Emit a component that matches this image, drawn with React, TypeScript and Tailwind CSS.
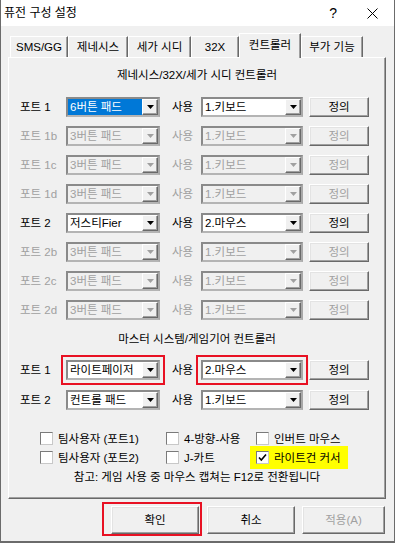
const font = "font-['Liberation_Sans','Noto_Sans_CJK_KR',sans-serif]";

type Port = { label: string; device: string; use: string; on: boolean; picked?: boolean };

const genesisPorts: Port[] = [
  { label: "포트 1", device: "6버튼 패드", use: "1.키보드", on: true, picked: true },
  { label: "포트 1b", device: "3버튼 패드", use: "1.키보드", on: false },
  { label: "포트 1c", device: "3버튼 패드", use: "1.키보드", on: false },
  { label: "포트 1d", device: "3버튼 패드", use: "1.키보드", on: false },
  { label: "포트 2", device: "저스티Fier", use: "2.마우스", on: true },
  { label: "포트 2b", device: "3버튼 패드", use: "1.키보드", on: false },
  { label: "포트 2c", device: "3버튼 패드", use: "1.키보드", on: false },
  { label: "포트 2d", device: "3버튼 패드", use: "1.키보드", on: false },
];

const tabs = [
  { name: "SMS/GG", w: "w-[58px]" },
  { name: "제네시스", w: "w-[60px]" },
  { name: "세가 시디", w: "w-[63px]" },
  { name: "32X", w: "w-[48px]" },
  { name: "컨트롤러", w: "w-[62px]", active: true },
  { name: "부가 기능", w: "w-[62px]" },
];

const Combo = ({ text, on, picked, w, ring }: { text: string; on: boolean; picked?: boolean; w: string; ring?: boolean }) => (
  <div
    className={`${w} flex h-[20px] shrink-0 items-stretch border-2 border-[#8a8a8a] border-b-[#b4b4b4] border-r-[#a8a8a8] ${
      on ? "bg-white" : "bg-[#f0f0f0]"
    } ${ring ? "outline-2 outline-offset-[3px] outline-[#e81123]" : ""}`}
  >
    <div className="flex flex-1 items-center overflow-hidden">
      <span
        className={`flex h-full w-full items-center whitespace-nowrap pl-[2px] ${
          picked ? "bg-[#0078d7] text-white" : on ? "text-black" : "text-[#a0a0a0]"
        }`}
      >
        {text}
      </span>
    </div>
    <div className="flex w-[16px] items-center justify-center border border-t-white border-l-white border-b-[#696969] border-r-[#696969] bg-[#f0f0f0] shadow-[inset_-1px_-1px_0_#a0a0a0]">
      <svg width="7" height="4" viewBox="0 0 7 4">
        <path d="M0 0h7L3.5 4z" fill={on ? "#000" : "#a0a0a0"} />
      </svg>
    </div>
  </div>
);

const WinButton = ({ text, on = true, w, h }: { text: string; on?: boolean; w: string; h: string }) => (
  <div
    className={`${w} ${h} flex shrink-0 items-center justify-center border border-t-white border-l-white border-b-[#696969] border-r-[#696969] bg-[#f0f0f0] shadow-[inset_-1px_-1px_0_#a0a0a0,inset_1px_1px_0_#e3e3e3] ${
      on ? "text-black" : "text-[#a0a0a0]"
    }`}
  >
    {text}
  </div>
);

const PortRow = ({ p, mt, ring1, ring2 }: { p: Port; mt: string; ring1?: boolean; ring2?: boolean }) => (
  <div className={`flex h-[20px] items-center pl-[11px] ${mt}`}>
    <span className={`w-[46px] shrink-0 whitespace-nowrap ${p.on ? "text-black" : "text-[#a0a0a0]"}`}>{p.label}</span>
    <Combo text={p.device} on={p.on} picked={p.picked} w="w-[94px]" ring={ring1} />
    <span className={`ml-[12px] w-[29px] shrink-0 ${p.on ? "text-black" : "text-[#a0a0a0]"}`}>사용</span>
    <Combo text={p.use} on={p.on} w="w-[102px]" ring={ring2} />
    <div className="ml-[6px]">
      <WinButton text="정의" on={p.on} w="w-[60px]" h="h-[20px]" />
    </div>
  </div>
);

const Check = ({ label, checked }: { label: string; checked?: boolean }) => (
  <div className="flex items-center">
    <div className="flex h-[13px] w-[13px] shrink-0 items-center justify-center border border-[#7a7a7a] border-b-[#c8c8c8] border-r-[#c8c8c8] bg-white">
      {checked ? (
        <svg width="9" height="9" viewBox="0 0 9 9">
          <path d="M1 4.5l2.3 2.5L8 1.5" fill="none" stroke="#000" strokeWidth="1.6" />
        </svg>
      ) : null}
    </div>
    <span className="ml-[5px] whitespace-nowrap">{label}</span>
  </div>
);

export default function App() {
  return (
    <div className={`${font} h-[543px] w-[395px] overflow-hidden border-x border-b-2 border-[#6b6b6b] bg-[#f0f0f0] text-[11.5px] leading-[16px] text-black`}>
      {/* title bar */}
      <div className="flex h-[26px] items-center bg-white pl-[3px]">
        <span className="text-[12px]">퓨전 구성 설정</span>
        <span className="ml-auto mr-[30px] text-[14px]">?</span>
        <svg width="11" height="11" viewBox="0 0 11 11" className="mr-[16px]">
          <path d="M0.5 0.5l10 10M10.5 0.5l-10 10" stroke="#000" strokeWidth="1" />
        </svg>
      </div>

      {/* tabs */}
      <div className="mt-[7px] flex h-[24px] items-end pl-[9px]">
        {tabs.map((t) =>
          t.active ? (
            <div
              key={t.name}
              className={`${t.w} relative z-10 -mb-px flex h-[25px] items-start justify-center border-l border-t border-r border-l-white border-t-white border-r-[#696969] bg-[#f0f0f0] pt-[3px] shadow-[inset_-1px_0_0_#a0a0a0]`}
            >
              {t.name}
            </div>
          ) : (
            <div
              key={t.name}
              className={`${t.w} flex h-[21px] items-center justify-center border-l border-t border-r border-l-white border-t-white border-r-[#696969] shadow-[inset_-1px_0_0_#a0a0a0]`}
            >
              {t.name}
            </div>
          )
        )}
      </div>

      {/* panel */}
      <div className="ml-[7px] flex h-[442px] w-[378px] flex-col border border-t-white border-l-white border-b-[#696969] border-r-[#696969] pt-[9px] shadow-[inset_-1px_-1px_0_#a0a0a0]">
        <div className="text-center">제네시스/32X/세가 시디 컨트롤러</div>
        {genesisPorts.map((p, i) => (
          <PortRow key={p.label} p={p} mt={i === 0 ? "mt-[14px]" : "mt-[9px]"} />
        ))}

        <div className="mt-[11px] text-center">마스터 시스템/게임기어 컨트롤러</div>
        <PortRow p={{ label: "포트 1", device: "라이트페이저", use: "2.마우스", on: true }} mt="mt-[13px]" ring1 ring2 />
        <PortRow p={{ label: "포트 2", device: "컨트롤 패드", use: "1.키보드", on: true }} mt="mt-[10px]" />

        <div className="mt-[19px] flex flex-col pl-[31px]">
          <div className="flex h-[19px] items-center">
            <div className="w-[126px]"><Check label="팀사용자 (포트1)" /></div>
            <div className="w-[90px]"><Check label="4-방향-사용" /></div>
            <Check label="인버트 마우스" />
          </div>
          <div className="flex h-[19px] items-center">
            <div className="w-[126px]"><Check label="팀사용자 (포트2)" /></div>
            <div className="w-[84px]"><Check label="J-카트" /></div>
            <div className="flex h-[23px] w-[98px] items-center bg-[#ffff00] pl-[6px]">
              <Check label="라이트건 커서" checked />
            </div>
          </div>
        </div>
        <div className="mt-[2px] text-center">참고: 게임 사용 중 마우스 캡쳐는 F12로 전환됩니다</div>
      </div>

      {/* buttons */}
      <div className="mt-[3px] flex items-start pl-[101px]">
        <div className="border-2 border-[#e81123] pb-0 pl-[7px] pr-[1px] pt-[2px]">
          <WinButton text="확인" w="w-[88px]" h="h-[28px]" />
        </div>
        <div className="ml-[5px] mt-[4px]">
          <WinButton text="취소" w="w-[88px]" h="h-[28px]" />
        </div>
        <div className="ml-[7px] mt-[4px]">
          <WinButton text="적용(A)" on={false} w="w-[83px]" h="h-[28px]" />
        </div>
      </div>
    </div>
  );
}
